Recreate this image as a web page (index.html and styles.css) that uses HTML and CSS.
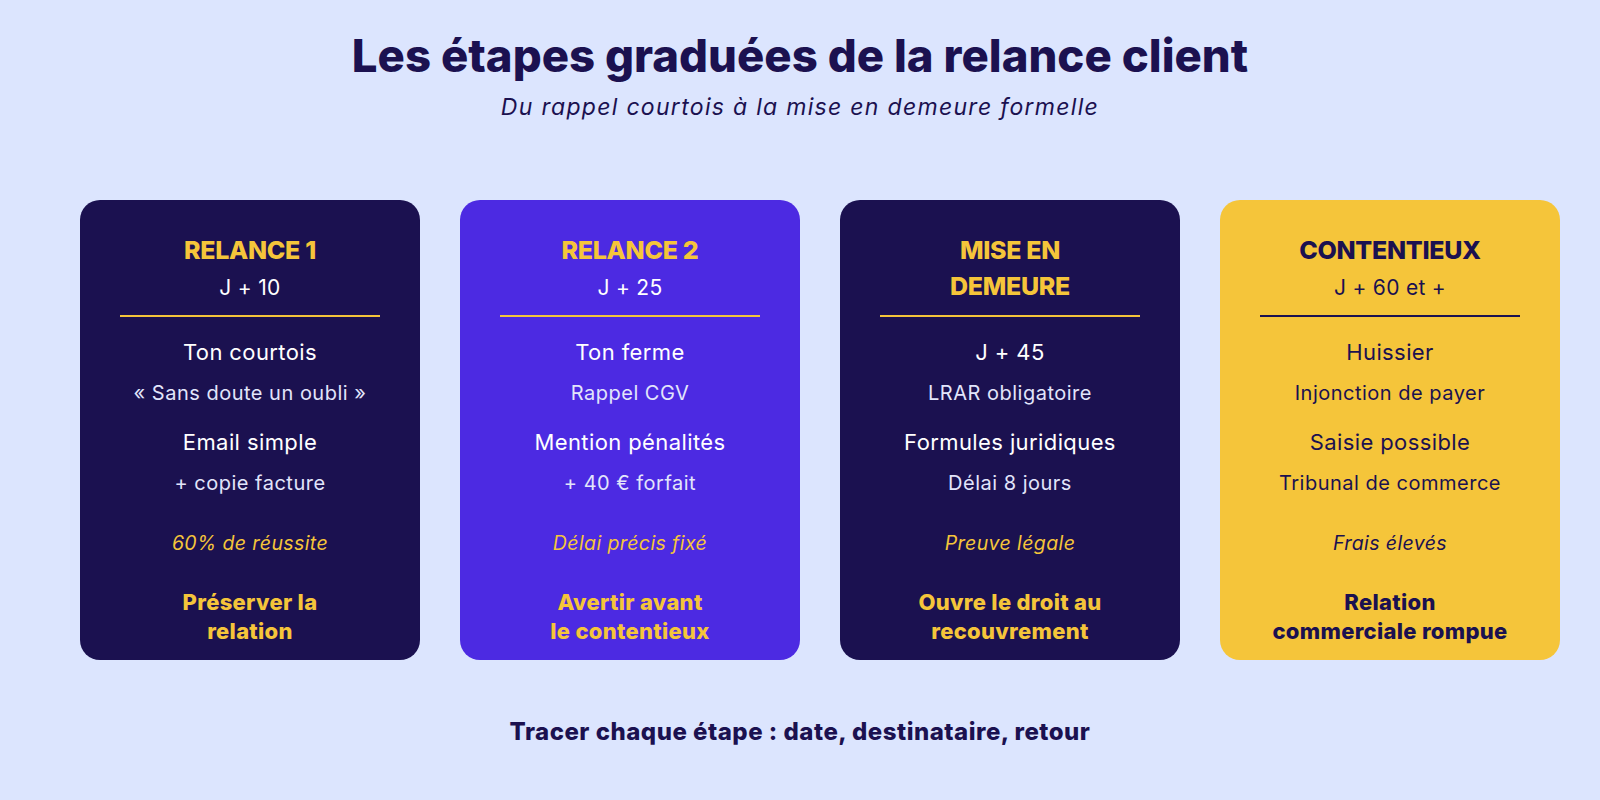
FILE: index.html
```html
<!DOCTYPE html>
<html lang="fr">
<head>
<meta charset="utf-8">
<title>Les étapes graduées de la relance client</title>
<link rel="stylesheet" href="styles.css">
</head>
<body>
<main class="page">
  <header class="head">
    <h1 class="title">Les étapes graduées de la relance client</h1>
    <p class="subtitle">Du rappel courtois à la mise en demeure formelle</p>
  </header>

  <section class="cards">
    <article class="card card--navy">
      <div class="card-head">
        <h2 class="card-title">RELANCE 1</h2>
        <p class="card-sub">J + 10</p>
      </div>
      <hr class="divider">
      <p class="item item--first">Ton courtois</p>
      <p class="detail">« Sans doute un oubli »</p>
      <p class="item">Email simple</p>
      <p class="detail">+ copie facture</p>
      <p class="note">60% de réussite</p>
      <p class="goal">Préserver la<br>relation</p>
    </article>

    <article class="card card--purple">
      <div class="card-head">
        <h2 class="card-title">RELANCE 2</h2>
        <p class="card-sub">J + 25</p>
      </div>
      <hr class="divider">
      <p class="item item--first">Ton ferme</p>
      <p class="detail">Rappel CGV</p>
      <p class="item">Mention pénalités</p>
      <p class="detail">+ 40 € forfait</p>
      <p class="note">Délai précis fixé</p>
      <p class="goal">Avertir avant<br>le contentieux</p>
    </article>

    <article class="card card--navy">
      <div class="card-head">
        <h2 class="card-title">MISE EN<br>DEMEURE</h2>
      </div>
      <hr class="divider">
      <p class="item item--first">J + 45</p>
      <p class="detail">LRAR obligatoire</p>
      <p class="item">Formules juridiques</p>
      <p class="detail">Délai 8 jours</p>
      <p class="note">Preuve légale</p>
      <p class="goal">Ouvre le droit au<br>recouvrement</p>
    </article>

    <article class="card card--yellow">
      <div class="card-head">
        <h2 class="card-title">CONTENTIEUX</h2>
        <p class="card-sub">J + 60 et +</p>
      </div>
      <hr class="divider">
      <p class="item item--first">Huissier</p>
      <p class="detail">Injonction de payer</p>
      <p class="item">Saisie possible</p>
      <p class="detail">Tribunal de commerce</p>
      <p class="note">Frais élevés</p>
      <p class="goal">Relation<br>commerciale rompue</p>
    </article>
  </section>

  <footer class="foot">Tracer chaque étape : date, destinataire, retour</footer>
</main>
</body>
</html>
```

FILE: styles.css
```css
* { box-sizing: border-box; }

html, body {
  margin: 0;
  padding: 0;
  background: #dce5fe;
}

body {
  width: 1600px;
  height: 800px;
  overflow: hidden;
  font-family: "Inter", "Noto Sans", "Liberation Sans", sans-serif;
  color: #1b1150;
}

.page {
  display: flex;
  flex-direction: column;
  align-items: center;
  padding-top: 28px;
}

.head {
  text-align: center;
}

.title {
  margin: 0;
  font-size: 45.5px;
  line-height: 56px;
  font-weight: 800;
  letter-spacing: 0;
  color: #1b1150;
}

.subtitle {
  margin: 8px 0 0;
  font-size: 23px;
  line-height: 30px;
  font-style: italic;
  letter-spacing: 1.3px;
  color: #1b1150;
}

.cards {
  align-self: stretch;
  display: grid;
  grid-template-columns: repeat(4, 340px);
  column-gap: 40px;
  margin-top: 78px;
  padding-left: 80px;
}

.card {
  height: 460px;
  border-radius: 20px;
  padding: 32px 40px 0;
  display: flex;
  flex-direction: column;
  align-items: center;
  text-align: center;
}

.card p, .card h2 { margin: 0; }

.card--navy { background: #1b1150; color: #ffffff; }
.card--purple { background: #4c2ae2; color: #ffffff; }
.card--yellow { background: #f5c53a; color: #1b1150; }

.card-head {
  height: 83px;
}

.card-title {
  font-size: 25px;
  line-height: 36px;
  font-weight: 800;
  letter-spacing: -0.3px;
  color: #f5c53a;
}

.card--yellow .card-title { color: #1b1150; }

.card-sub {
  margin-top: 2px !important;
  font-size: 21px;
  line-height: 36px;
  font-weight: 400;
  letter-spacing: 0.3px;
}

.divider {
  align-self: stretch;
  margin: 0;
  border: 0;
  height: 2px;
  background: #f5c53a;
}

.card--yellow .divider { background: #1b1150; }

.item {
  margin-top: 18px !important;
  font-size: 22px;
  line-height: 32px;
  font-weight: 400;
  letter-spacing: 0.4px;
}

.item--first { margin-top: 19px !important; }

.detail {
  margin-top: 10px !important;
  font-size: 20px;
  line-height: 30px;
  letter-spacing: 0.5px;
  color: #e2e5fb;
}

.card--yellow .detail { color: #1b1150; }

.note {
  margin-top: 30px !important;
  font-size: 19.5px;
  line-height: 30px;
  font-style: italic;
  letter-spacing: 0.4px;
  color: #f5c53a;
}

.card--yellow .note { color: #1b1150; }

.goal {
  margin-top: 30px !important;
  font-size: 22px;
  line-height: 29px;
  font-weight: 800;
  letter-spacing: 0.3px;
  color: #f5c53a;
}

.card--yellow .goal { color: #1b1150; }

.foot {
  margin-top: 57px;
  font-size: 24px;
  line-height: 30px;
  font-weight: 800;
  letter-spacing: 0.5px;
  color: #1b1150;
}
```
